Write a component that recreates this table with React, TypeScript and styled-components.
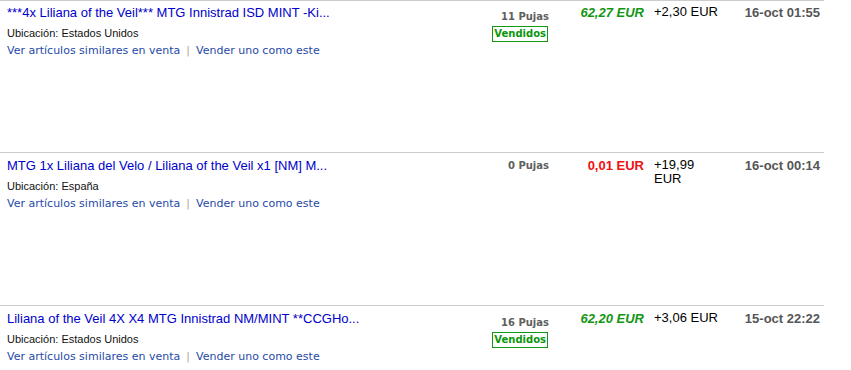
import React from "react";
import styled, { createGlobalStyle } from "styled-components";

const GlobalStyle = createGlobalStyle`
  html, body {
    margin: 0;
    padding: 0;
    background: #ffffff;
  }
  body {
    font-family: "Liberation Sans", Arial, sans-serif;
  }
`;

type Listing = {
  title: string;
  location: string;
  bids: number;
  sold: boolean;
  price: string;
  shipping: string;
  ends: string;
};

const listings: Listing[] = [
  {
    title: "***4x Liliana of the Veil*** MTG Innistrad ISD MINT -Ki...",
    location: "Estados Unidos",
    bids: 11,
    sold: true,
    price: "62,27 EUR",
    shipping: "+2,30 EUR",
    ends: "16-oct 01:55",
  },
  {
    title: "MTG 1x Liliana del Velo / Liliana of the Veil x1 [NM] M...",
    location: "España",
    bids: 0,
    sold: false,
    price: "0,01 EUR",
    shipping: "+19,99 EUR",
    ends: "16-oct 00:14",
  },
  {
    title: "Liliana of the Veil 4X X4 MTG Innistrad NM/MINT **CCGHo...",
    location: "Estados Unidos",
    bids: 16,
    sold: true,
    price: "62,20 EUR",
    shipping: "+3,06 EUR",
    ends: "15-oct 22:22",
  },
];

const List = styled.div`
  width: 824px;
  border-top: 1px solid #cccccc;
`;

const Row = styled.div`
  box-sizing: border-box;
  display: grid;
  grid-template-columns: 490px 63px 95px 77px 99px;
  align-items: start;
  height: 151px;
  padding-top: 4px;
  & + & {
    height: 153px;
    padding-top: 5px;
    border-top: 1px solid #cccccc;
  }
`;

const Details = styled.div`
  padding-left: 7px;
  display: flex;
  flex-direction: column;
`;

const Title = styled.a`
  font-family: "Liberation Sans", Arial, sans-serif;
  font-size: 13px;
  line-height: 15px;
  color: #0000cc;
  text-decoration: none;
  white-space: nowrap;
`;

const Location = styled.div`
  margin-top: 7px;
  font-family: "Liberation Sans", Arial, sans-serif;
  font-size: 11px;
  line-height: 13px;
  color: #111111;
`;

const Links = styled.div`
  margin-top: 4px;
  font-family: "DejaVu Sans", Verdana, sans-serif;
  font-size: 11px;
  line-height: 13px;
  color: #1f4aa8;
  white-space: nowrap;
`;

const LinkText = styled.a`
  color: inherit;
  text-decoration: none;
`;

const Divider = styled.span`
  color: #c39aa2;
  margin: 0 6px;
`;

const BidsCell = styled.div<{ $sold: boolean }>`
  padding-right: 4px;
  padding-top: ${(p) => (p.$sold ? "5px" : "1px")};
  display: flex;
  flex-direction: column;
  align-items: flex-end;
`;

const Bids = styled.span`
  font-family: "DejaVu Sans", Verdana, sans-serif;
  font-weight: bold;
  font-size: 10px;
  line-height: 13px;
  color: #606060;
`;

const SoldBadge = styled.span`
  margin-top: 3px;
  margin-right: 1px;
  border: 1px solid #119911;
  padding: 1px 1px;
  font-family: "DejaVu Sans", Verdana, sans-serif;
  font-weight: bold;
  font-size: 10px;
  line-height: 12px;
  color: #0b960b;
`;

const Price = styled.div<{ $sold: boolean }>`
  padding-right: 4px;
  text-align: right;
  font-family: "Liberation Sans", Arial, sans-serif;
  font-size: 13px;
  line-height: 15px;
  font-weight: bold;
  font-style: ${(p) => (p.$sold ? "italic" : "normal")};
  color: ${(p) => (p.$sold ? "#139613" : "#f01010")};
`;

const Shipping = styled.div`
  padding-left: 6px;
  padding-right: 4px;
  font-family: "Liberation Sans", Arial, sans-serif;
  font-size: 13px;
  line-height: 14px;
  color: #000000;
`;

const Ends = styled.div`
  padding-right: 4px;
  text-align: right;
  font-family: "Liberation Sans", Arial, sans-serif;
  font-size: 13px;
  line-height: 15px;
  font-weight: bold;
  color: #555555;
  white-space: nowrap;
`;

export default function App() {
  return (
    <>
      <GlobalStyle />
      <List>
        {listings.map((item) => (
          <Row key={item.title}>
            <Details>
              <Title href="#">{item.title}</Title>
              <Location>Ubicación: {item.location}</Location>
              <Links>
                <LinkText href="#">Ver artículos similares en venta</LinkText>
                <Divider>|</Divider>
                <LinkText href="#">Vender uno como este</LinkText>
              </Links>
            </Details>
            <BidsCell $sold={item.sold}>
              <Bids>{item.bids} Pujas</Bids>
              {item.sold && <SoldBadge>Vendidos</SoldBadge>}
            </BidsCell>
            <Price $sold={item.sold}>{item.price}</Price>
            <Shipping>{item.shipping}</Shipping>
            <Ends>{item.ends}</Ends>
          </Row>
        ))}
      </List>
    </>
  );
}
